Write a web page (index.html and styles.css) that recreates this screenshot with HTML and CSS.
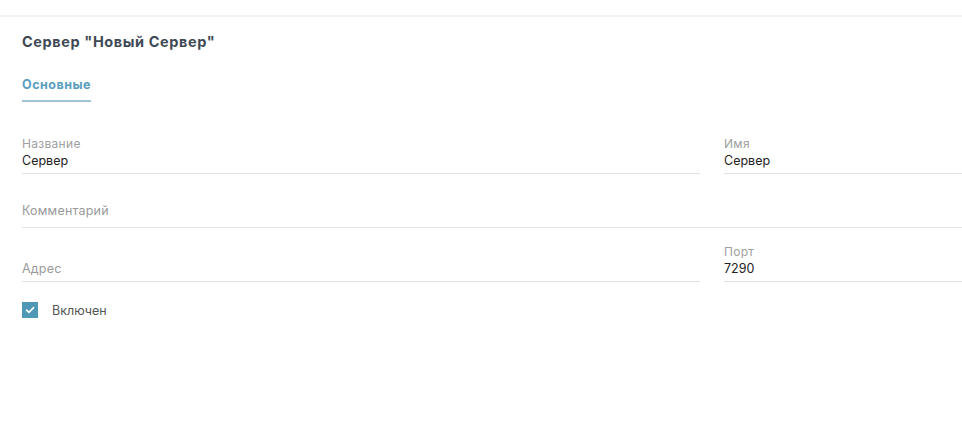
FILE: index.html
```html
<!DOCTYPE html>
<html lang="ru">
<head>
    <meta charset="UTF-8">
    <meta name="viewport" content="width=device-width, initial-scale=1.0">
    <title>Сервер</title>
    <link rel="stylesheet" href="styles.css">
</head>
<body>

    <div class="topbar"></div>

    <div class="page">
        <h1 class="title">Сервер "Новый Сервер"</h1>

        <div class="tabs">
            <span class="tab active">Основные</span>
        </div>

        <div class="form">
            <div class="field">
                <div class="label">Название</div>
                <div class="value">Сервер</div>
            </div>
            <div class="field">
                <div class="label">Имя</div>
                <div class="value">Сервер</div>
            </div>

            <div class="field wide">
                <div class="value comment placeholder">Комментарий</div>
            </div>

            <div class="field">
                <div class="label"></div>
                <div class="value placeholder">Адрес</div>
            </div>
            <div class="field">
                <div class="label">Порт</div>
                <div class="value">7290</div>
            </div>
        </div>

        <label class="check">
            <span class="box">
                <svg width="10" height="8" viewBox="0 0 10 8"><path d="M1.5 4.2 L3.9 6.4 L8.6 1.6" fill="none" stroke="#fff" stroke-width="1.6" stroke-linecap="round" stroke-linejoin="round"/></svg>
            </span>
            <span class="check-text">Включен</span>
        </label>
    </div>

</body>
</html>
```

FILE: styles.css
```css
body {
    margin: 0;
    padding: 0;
    background-color: white;
    font-family: Inter, "Noto Sans", sans-serif;
    color: #222;
}

.topbar {
    height: 15px;
    border-bottom: 2px solid #f2f2f2;
}

.page {
    padding: 15px 0 0 22px;
}

.title {
    margin: 0;
    font-size: 14.5px;
    line-height: 20px;
    font-weight: 700;
    letter-spacing: 0.6px;
    color: #3e4954;
}

.tabs {
    display: flex;
    margin-top: 25px;
}

.tab {
    font-size: 12.5px;
    line-height: 16px;
    font-weight: 700;
    letter-spacing: 0.5px;
    padding-bottom: 7px;
    color: #5a9ec0;
}

.tab.active {
    border-bottom: 2px solid #9fc6d8;
}

.form {
    display: grid;
    grid-template-columns: 678px 1fr;
    column-gap: 24px;
    row-gap: 16px;
    margin-top: 34px;
}

.field {
    border-bottom: 1px solid #e2e2e2;
}

.field.wide {
    grid-column: 1 / -1;
}

.label {
    height: 16px;
    font-size: 12px;
    line-height: 16px;
    letter-spacing: 0.3px;
    color: #a0a0a0;
}

.value {
    font-size: 12.5px;
    line-height: 18px;
    padding-bottom: 3px;
    color: #222;
}

.value.comment {
    padding-top: 12px;
    padding-bottom: 7px;
}

.placeholder {
    color: #9a9a9a;
    letter-spacing: 0.2px;
}

.check {
    display: flex;
    align-items: center;
    gap: 14px;
    margin-top: 20px;
}

.box {
    width: 16px;
    height: 16px;
    background-color: #4f98b6;
    display: flex;
    align-items: center;
    justify-content: center;
}

.check-text {
    font-size: 12.5px;
    color: #555;
}
```
